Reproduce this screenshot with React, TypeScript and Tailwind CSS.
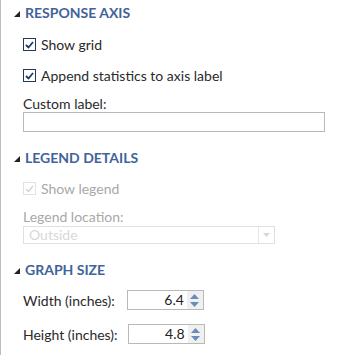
import React from 'react';

const font = { fontFamily: 'Lato, "Open Sans", sans-serif' };

const Heading: React.FC<{ title: string; className?: string }> = ({ title, className }) => (
  <div className={`flex items-center h-[17px] ${className ?? ''}`}>
    <svg width="6" height="6" viewBox="0 0 6 6" className="ml-[13px] mt-[2px]">
      <polygon points="6,0 6,6 0,6" fill="#222" />
    </svg>
    <span className="ml-[5px] text-[14px] font-bold text-[#41639a] leading-[17px]">{title}</span>
  </div>
);

const Check: React.FC<{ label: string; disabled?: boolean; className?: string }> = ({ label, disabled, className }) => (
  <div className={`flex items-center h-[17px] pl-[22px] ${className ?? ''}`}>
    <span
      className={`w-[13px] h-[13px] flex items-center justify-center border ${
        disabled ? 'border-[#e2e2e2] bg-white' : 'border-[#1f3b5c] bg-white'
      }`}
    >
      <svg width="9" height="8" viewBox="0 0 9 8">
        <polyline
          points="1,4 3.5,6.5 8,1"
          fill="none"
          stroke={disabled ? '#d0d0d0' : '#1f3b5c'}
          strokeWidth={disabled ? 1.2 : 1.8}
        />
      </svg>
    </span>
    <span className={`ml-[5px] text-[14px] leading-[17px] ${disabled ? 'text-[#a8a8a8]' : 'text-[#2a2a2a]'}`}>
      {label}
    </span>
  </div>
);

const Spinner: React.FC<{ value: string; gap: string; label: string; className?: string }> = ({ value, gap, label, className }) => (
  <div className={`flex items-center pl-[22px] ${className ?? ''}`}>
    <span className="text-[14px] text-[#2a2a2a] leading-[17px]">{label}</span>
    <div className={`${gap} flex h-[20px] w-[77px] border border-[#b9b9b9] bg-white`}>
      <span className="flex-1 text-right pr-[3px] text-[14px] leading-[18px] text-[#222]">{value}</span>
      <span className="w-[16px] bg-[#f0f0f0] flex flex-col items-center justify-center gap-[3px]">
        <svg width="9" height="5" viewBox="0 0 9 5">
          <polygon points="4.5,0 9,5 0,5" fill="#6b8cba" />
        </svg>
        <svg width="9" height="5" viewBox="0 0 9 5">
          <polygon points="0,0 9,0 4.5,5" fill="#6b8cba" />
        </svg>
      </span>
    </div>
  </div>
);

export default function App() {
  return (
    <div className="w-[346px] h-[355px] bg-white overflow-hidden" style={font}>
      <div className="h-full border-l border-[#bdbdbd] flex flex-col">
        <Heading title="RESPONSE AXIS" className="mt-[4px]" />
        <Check label="Show grid" className="mt-[15px]" />
        <Check label="Append statistics to axis label" className="mt-[14px]" />
        <div className="pl-[22px] mt-[11px] text-[14px] leading-[17px] text-[#2a2a2a]">Custom label:</div>
        <div className="ml-[22px] mt-[0px] w-[302px] h-[20px] border border-[#b9b9b9] bg-white" />

        <Heading title="LEGEND DETAILS" className="mt-[17px]" />
        <Check label="Show legend" disabled className="mt-[14px]" />
        <div className="pl-[22px] mt-[11px] text-[14px] leading-[17px] text-[#a8a8a8]">Legend location:</div>
        <div className="ml-[22px] mt-[1px] w-[252px] h-[18px] border border-[#e0e0e0] bg-white flex">
          <span className="flex-1 pl-[5px] text-[14px] leading-[16px] text-[#d8d8d8]">Outside</span>
          <span className="w-[16px] border-l border-[#e6e6e6] flex items-center justify-center">
            <svg width="7" height="4" viewBox="0 0 7 4">
              <polygon points="0,0 7,0 3.5,4" fill="#cfd8e6" />
            </svg>
          </span>
        </div>

        <Heading title="GRAPH SIZE" className="mt-[17px]" />
        <Spinner label="Width (inches):" value="6.4" gap="ml-[12px]" className="mt-[12px]" />
        <Spinner label="Height (inches):" value="4.8" gap="ml-[10px]" className="mt-[14px]" />
      </div>
    </div>
  );
}
